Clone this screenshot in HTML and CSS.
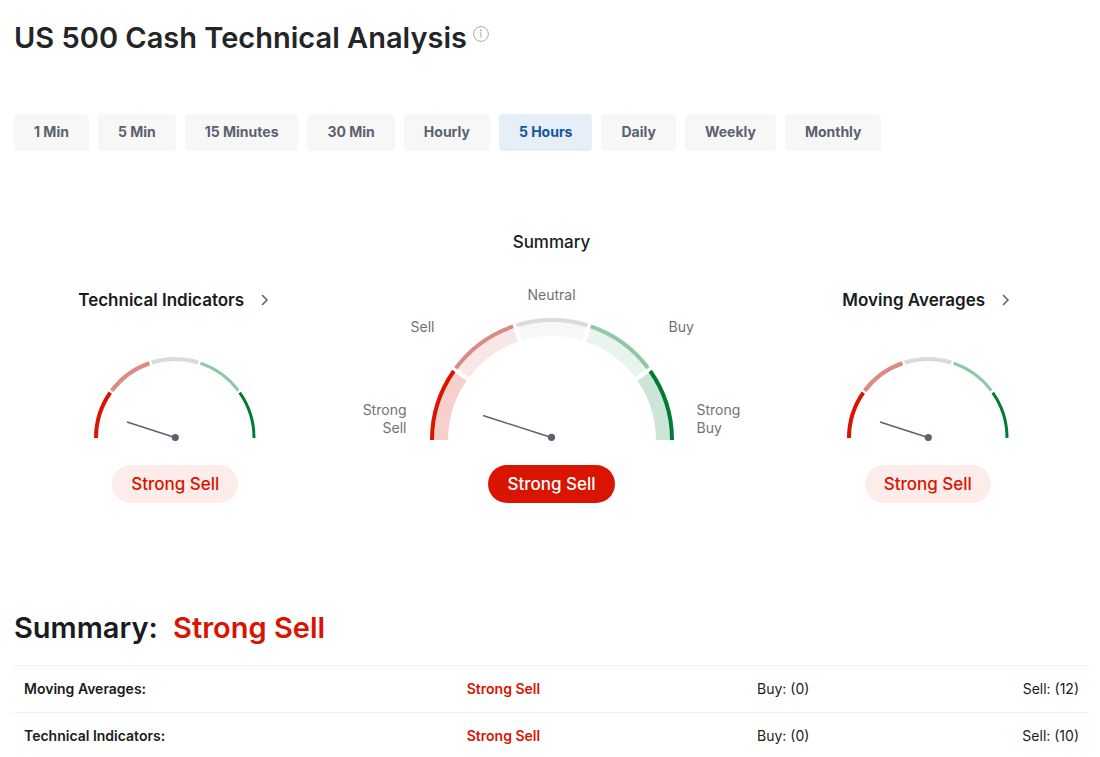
FILE: index.html
```html
<!DOCTYPE html>
<html lang="en">
<head>
    <meta charset="UTF-8">
    <meta name="viewport" content="width=device-width, initial-scale=1.0">
    <title>US 500 Cash Technical Analysis</title>
    <link rel="stylesheet" href="styles.css">
</head>
<body>
    <main class="page">
        <div class="page-header">
            <h1>US 500 Cash Technical Analysis</h1>
            <svg class="info-icon" viewBox="0 0 16 16" role="img" aria-label="Info">
                <circle cx="8" cy="8" r="7.4" />
                <path d="M8 6.6v5.2M7 7h1" />
                <circle class="info-dot" cx="7.9" cy="4.4" r="0.9" />
            </svg>
        </div>

        <div class="timeframes">
            <button type="button" class="timeframe">1 Min</button>
            <button type="button" class="timeframe">5 Min</button>
            <button type="button" class="timeframe">15 Minutes</button>
            <button type="button" class="timeframe">30 Min</button>
            <button type="button" class="timeframe">Hourly</button>
            <button type="button" class="timeframe active">5 Hours</button>
            <button type="button" class="timeframe">Daily</button>
            <button type="button" class="timeframe">Weekly</button>
            <button type="button" class="timeframe">Monthly</button>
        </div>

        <section class="gauges">
            <div class="gauge">
                <a class="gauge-link" href="#technical-indicators">
                    Technical Indicators
                    <svg class="chevron" viewBox="0 0 16 16"><path d="M6 3l5 5-5 5" /></svg>
                </a>
                <svg class="dial-small" viewBox="0 0 164 85">
                    <path class="arc strong-sell" pathLength="180" stroke-dasharray="35 400" d="M3 82a79 79 0 0 1 158 0" />
                    <path class="arc sell" pathLength="180" stroke-dasharray="34.4 400" stroke-dashoffset="-36.7" d="M3 82a79 79 0 0 1 158 0" />
                    <path class="arc neutral" pathLength="180" stroke-dasharray="34.4 400" stroke-dashoffset="-72.8" d="M3 82a79 79 0 0 1 158 0" />
                    <path class="arc buy" pathLength="180" stroke-dasharray="34.4 400" stroke-dashoffset="-108.8" d="M3 82a79 79 0 0 1 158 0" />
                    <path class="arc strong-buy" pathLength="180" stroke-dasharray="35 400" stroke-dashoffset="-145" d="M3 82a79 79 0 0 1 158 0" />
                    <path class="needle" d="M34 66l48 15.5" />
                    <circle class="pivot" cx="82.3" cy="81.5" r="3.6" />
                </svg>
                <span class="badge">Strong Sell</span>
            </div>

            <div class="gauge">
                <h2 class="gauge-title">Summary</h2>
                <div class="scale">
                    <span class="scale-top">Neutral</span>
                    <div class="scale-side scale-left">
                        <span class="scale-inner">Sell</span>
                        <span>Strong<br>Sell</span>
                    </div>
                    <svg class="dial-large" viewBox="0 0 244 123">
                        <path class="band strong-sell" pathLength="180" stroke-dasharray="34.8 400" d="M11 122a111 111 0 0 1 222 0" />
                        <path class="band sell" pathLength="180" stroke-dasharray="33.6 400" stroke-dashoffset="-37.2" d="M11 122a111 111 0 0 1 222 0" />
                        <path class="band neutral" pathLength="180" stroke-dasharray="33.6 400" stroke-dashoffset="-73.2" d="M11 122a111 111 0 0 1 222 0" />
                        <path class="band buy" pathLength="180" stroke-dasharray="33.6 400" stroke-dashoffset="-109.2" d="M11 122a111 111 0 0 1 222 0" />
                        <path class="band strong-buy" pathLength="180" stroke-dasharray="34.8 400" stroke-dashoffset="-145.2" d="M11 122a111 111 0 0 1 222 0" />
                        <path class="arc strong-sell" pathLength="180" stroke-dasharray="35.1 400" d="M2 122a120 120 0 0 1 240 0" />
                        <path class="arc sell" pathLength="180" stroke-dasharray="34.4 400" stroke-dashoffset="-36.7" d="M2 122a120 120 0 0 1 240 0" />
                        <path class="arc neutral" pathLength="180" stroke-dasharray="34.4 400" stroke-dashoffset="-72.8" d="M2 122a120 120 0 0 1 240 0" />
                        <path class="arc buy" pathLength="180" stroke-dasharray="34.4 400" stroke-dashoffset="-108.8" d="M2 122a120 120 0 0 1 240 0" />
                        <path class="arc strong-buy" pathLength="180" stroke-dasharray="35.1 400" stroke-dashoffset="-144.9" d="M2 122a120 120 0 0 1 240 0" />
                        <path class="needle" d="M53 97.5l68.5 22" />
                        <circle class="pivot" cx="121.5" cy="119.3" r="3.6" />
                    </svg>
                    <div class="scale-side scale-right">
                        <span class="scale-inner">Buy</span>
                        <span>Strong<br>Buy</span>
                    </div>
                </div>
                <span class="badge badge-solid">Strong Sell</span>
            </div>

            <div class="gauge">
                <a class="gauge-link" href="#moving-averages">
                    Moving Averages
                    <svg class="chevron" viewBox="0 0 16 16"><path d="M6 3l5 5-5 5" /></svg>
                </a>
                <svg class="dial-small" viewBox="0 0 164 85">
                    <path class="arc strong-sell" pathLength="180" stroke-dasharray="35 400" d="M3 82a79 79 0 0 1 158 0" />
                    <path class="arc sell" pathLength="180" stroke-dasharray="34.4 400" stroke-dashoffset="-36.7" d="M3 82a79 79 0 0 1 158 0" />
                    <path class="arc neutral" pathLength="180" stroke-dasharray="34.4 400" stroke-dashoffset="-72.8" d="M3 82a79 79 0 0 1 158 0" />
                    <path class="arc buy" pathLength="180" stroke-dasharray="34.4 400" stroke-dashoffset="-108.8" d="M3 82a79 79 0 0 1 158 0" />
                    <path class="arc strong-buy" pathLength="180" stroke-dasharray="35 400" stroke-dashoffset="-145" d="M3 82a79 79 0 0 1 158 0" />
                    <path class="needle" d="M34 66l48 15.5" />
                    <circle class="pivot" cx="82.3" cy="81.5" r="3.6" />
                </svg>
                <span class="badge">Strong Sell</span>
            </div>
        </section>

        <h2 class="summary-title">Summary: <span class="signal">Strong Sell</span></h2>
        <table class="summary-table">
            <tbody>
                <tr>
                    <th scope="row">Moving Averages:</th>
                    <td class="signal">Strong Sell</td>
                    <td>Buy: (0)</td>
                    <td class="last">Sell: (12)</td>
                </tr>
                <tr>
                    <th scope="row">Technical Indicators:</th>
                    <td class="signal">Strong Sell</td>
                    <td>Buy: (0)</td>
                    <td class="last">Sell: (10)</td>
                </tr>
            </tbody>
        </table>
    </main>
</body>
</html>
```
FILE: styles.css
```css
* {
    box-sizing: border-box;
}

body {
    margin: 0;
    background: #fff;
    color: #181c21;
    font-family: Inter, Arial, sans-serif;
    font-size: 14px;
    line-height: 18px;
}

.page {
    padding: 18px 11px 0 14px;
}

.page-header {
    display: flex;
    align-items: flex-start;
    gap: 6px;
}

h1 {
    margin: 0;
    font-size: 29px;
    line-height: 40px;
    font-weight: 600;
    color: #232526;
}

.info-icon {
    width: 16px;
    height: 16px;
    margin-top: 8px;
    fill: none;
    stroke: #a9abad;
}

.info-icon .info-dot {
    fill: #a9abad;
    stroke: none;
}

/* Timeframe buttons */
.timeframes {
    display: flex;
    flex-wrap: wrap;
    gap: 9px;
    margin-top: 56px;
}

.timeframe {
    padding: 9px 20px 10px;
    border: none;
    border-radius: 4px;
    background: #f7f7f8;
    color: #5b616e;
    font-family: inherit;
    font-size: 14px;
    line-height: 18px;
    font-weight: 700;
    cursor: pointer;
}

.timeframe:hover,
.timeframe.active {
    background: #e6eef7;
    color: #1256a0;
}

/* Gauges */
.gauges {
    display: grid;
    grid-template-columns: 3fr 4fr 3fr;
    align-items: end;
    margin-top: 81px;
}

.gauge {
    display: flex;
    flex-direction: column;
    align-items: center;
}

.gauge-title {
    margin: 0 0 34px;
    font-size: 17px;
    line-height: 20px;
    font-weight: 500;
}

.gauge-link {
    display: flex;
    align-items: center;
    gap: 12px;
    margin-bottom: 46px;
    font-size: 17px;
    line-height: 20px;
    font-weight: 600;
    color: inherit;
    text-decoration: none;
}

.chevron {
    width: 16px;
    height: 16px;
    fill: none;
    stroke: #5b616e;
    stroke-width: 1.5;
}

.dial-small {
    width: 164px;
    height: 85px;
}

.dial-large {
    width: 244px;
    height: 123px;
}

.scale {
    display: grid;
    grid-template-columns: 1fr 244px 1fr;
    row-gap: 14px;
    width: 100%;
    color: #6f7277;
}

.scale-top {
    grid-column: 1 / -1;
    text-align: center;
}

.scale-side {
    display: flex;
    flex-direction: column;
    justify-content: space-between;
    padding-bottom: 4px;
}

.scale-left {
    align-items: flex-end;
    padding-right: 23px;
    text-align: right;
}

.scale-right {
    align-items: flex-start;
    padding-left: 23px;
}

/* the upper labels lean in over the curve of the dial */
.scale-inner {
    margin: 0 -28px;
}

.arc {
    fill: none;
    stroke-width: 4;
}

.arc.strong-sell { stroke: #d91400; }
.arc.sell { stroke: #d98b84; }
.arc.neutral { stroke: #d9dada; }
.arc.buy { stroke: #8fc8a4; }
.arc.strong-buy { stroke: #007c32; }

.dial-small .buy,
.dial-small .strong-buy {
    stroke-width: 3;
}

.band {
    fill: none;
    stroke-width: 14;
}

.band.strong-sell { stroke: #f7cfcb; }
.band.sell { stroke: #f9e7e5; }
.band.neutral { stroke: #f7f7f7; }
.band.buy { stroke: #e9f4ee; }
.band.strong-buy { stroke: #cce5d6; }

.needle {
    stroke: #5b616e;
    stroke-width: 1.5;
}

.pivot {
    fill: #5b616e;
}

.badge {
    margin-top: 24px;
    padding: 9px 19px;
    border-radius: 19px;
    background: #fcecea;
    color: #d91400;
    font-size: 17px;
    line-height: 20px;
    font-weight: 500;
}

.badge-solid {
    background: #d91400;
    color: #fff;
}

/* Summary table */
.summary-title {
    margin: 105px 0 17px;
    font-size: 29px;
    line-height: 40px;
    font-weight: 600;
}

.signal {
    color: #d91400;
}

.summary-title .signal {
    margin-left: 8px;
}

.summary-table {
    width: 100%;
    border-collapse: collapse;
}

.summary-table th,
.summary-table td {
    padding: 14px 10px;
    border-top: 1px solid #eeeff0;
    text-align: left;
    font-weight: 400;
}

.summary-table td {
    padding-left: 12px;
}

.summary-table th {
    width: 41%;
}

.summary-table th,
.summary-table .signal {
    font-weight: 600;
}

.summary-table .signal {
    width: 27%;
}

.summary-table .last {
    text-align: right;
}
```
